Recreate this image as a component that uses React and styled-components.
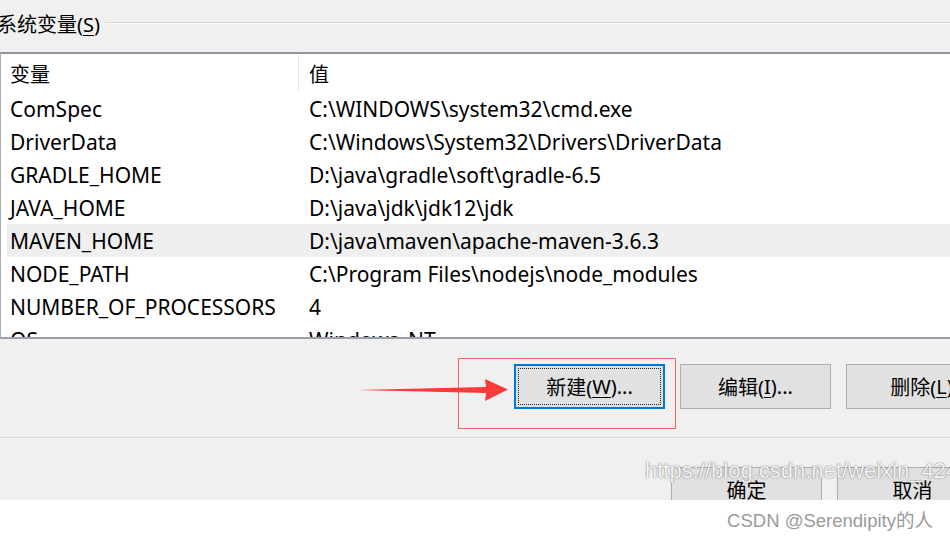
import React from "react";
import styled, { createGlobalStyle } from "styled-components";

const Global = createGlobalStyle`
  html, body { margin: 0; padding: 0; background: #ffffff; }
  body { width: 950px; height: 538px; overflow: hidden; }
  #root { width: 950px; height: 538px; }
`;

const Page = styled.div`
  position: relative;
  width: 950px;
  height: 538px;
  overflow: hidden;
  font-family: "Noto Sans", "Noto Sans CJK SC", sans-serif;
  color: #000;
`;

const Dialog = styled.div`
  height: 500px;
  background: #f0f0f0;
  overflow: hidden;
  display: flex;
  flex-direction: column;
  & > * { flex: none; }
`;

const GroupHead = styled.div`
  height: 46px;
  display: flex;
  align-items: center;
  gap: 6px;
  margin-left: -3px;
`;

const GroupTitle = styled.span`
  font-size: 20px;
  white-space: nowrap;
`;

const GroupLine = styled.div`
  flex: 1;
  height: 1px;
  background: #d5d5d5;
  border-bottom: 1px solid #fafafa;
`;

const ListBox = styled.div`
  margin-top: 6px;
  width: 1000px;
  height: 287px;
  background: #fff;
  border-top: 2px solid #8f959e;
  border-bottom: 2px solid #9aa0a8;
  border-left: 1px solid #a9adb3;
  padding-left: 6px;
  overflow: hidden;
  box-sizing: border-box;
`;

const Row = styled.div`
  display: flex;
  align-items: center;
  height: ${(p) => (p.$head ? 38 : 33)}px;
  background: ${(p) => (p.$hover ? "#efefef" : "transparent")};
  font-size: 21px;
  white-space: nowrap;
`;

const NameCell = styled.div`
  width: 292px;
  box-sizing: border-box;
  padding-left: 3px;
  height: ${(p) => (p.$head ? 36 : 33)}px;
  display: flex;
  align-items: center;
  font-size: ${(p) => (p.$head ? 20 : 21)}px;
  border-right: 1px solid ${(p) => (p.$head ? "#e5e5e5" : "transparent")};
`;

const ValueCell = styled.div`
  padding-left: 10px;
  font-size: ${(p) => (p.$head ? 20 : 21)}px;
`;

const U = styled.span`
  text-decoration: underline;
  text-underline-offset: 3px;
  text-decoration-thickness: 1px;
`;

const ActionRow = styled.div`
  display: flex;
  gap: 15px;
  padding-left: 514px;
  margin-top: 25px;
  height: 45px;
`;

const Button = styled.div`
  position: relative;
  flex: none;
  width: 151px;
  height: 45px;
  box-sizing: border-box;
  background: #e1e1e1;
  border: ${(p) => (p.$focus ? "2px solid #0078d7" : "1px solid #adadad")};
  display: flex;
  align-items: center;
  justify-content: center;
  font-size: 20px;
  white-space: nowrap;
  &::after {
    content: "";
    display: ${(p) => (p.$focus ? "block" : "none")};
    position: absolute;
    inset: 2px;
    border: 1px dotted #222;
  }
`;

const Separator = styled.div`
  margin-top: 28px;
  height: 1px;
  background: #dadada;
  border-bottom: 1px solid #f7f7f7;
`;

const FooterButtons = styled.div`
  display: flex;
  gap: 15px;
  padding-left: 671px;
  margin-top: 28px;
`;

const Footer = styled.div`
  height: 38px;
  display: flex;
  align-items: center;
  justify-content: flex-end;
  padding-right: 17px;
  font-family: "Liberation Sans", "Noto Sans CJK SC", sans-serif;
  font-size: 18.5px;
  color: #9a9a9a;
`;

const Highlight = styled.div`
  position: absolute;
  left: 458px;
  top: 358px;
  width: 218px;
  height: 71px;
  box-sizing: border-box;
  border: 1.5px solid #f06666;
`;

const ArrowSvg = styled.svg`
  position: absolute;
  left: 355px;
  top: 376px;
`;

const Watermark = styled.div`
  position: absolute;
  left: 645px;
  top: 458px;
  font-family: "Liberation Sans", sans-serif;
  font-size: 22px;
  color: rgba(255, 255, 255, 0.95);
  text-shadow: 0 0 1px rgba(80, 80, 80, 0.8), 0 0 2px rgba(110, 110, 110, 0.5);
  white-space: nowrap;
`;

const rows = [
  ["ComSpec", "C:\\WINDOWS\\system32\\cmd.exe"],
  ["DriverData", "C:\\Windows\\System32\\Drivers\\DriverData"],
  ["GRADLE_HOME", "D:\\java\\gradle\\soft\\gradle-6.5"],
  ["JAVA_HOME", "D:\\java\\jdk\\jdk12\\jdk"],
  ["MAVEN_HOME", "D:\\java\\maven\\apache-maven-3.6.3", true],
  ["NODE_PATH", "C:\\Program Files\\nodejs\\node_modules"],
  ["NUMBER_OF_PROCESSORS", "4"],
  ["OS", "Windows_NT"],
];

export default function App() {
  return (
    <Page>
      <Global />
      <Dialog>
        <GroupHead>
          <GroupTitle>
            系统变量(<U>S</U>)
          </GroupTitle>
          <GroupLine />
        </GroupHead>
        <ListBox>
          <Row $head>
            <NameCell $head>变量</NameCell>
            <ValueCell $head>值</ValueCell>
          </Row>
          {rows.map(([n, v, h]) => (
            <Row key={n} $hover={h}>
              <NameCell>{n}</NameCell>
              <ValueCell>{v}</ValueCell>
            </Row>
          ))}
        </ListBox>
        <ActionRow>
          <Button $focus>
            新建(<U>W</U>)...
          </Button>
          <Button>
            编辑(<U>I</U>)...
          </Button>
          <Button>
            删除(<U>L</U>)
          </Button>
        </ActionRow>
        <Separator />
        <FooterButtons>
          <Button>确定</Button>
          <Button>取消</Button>
        </FooterButtons>
      </Dialog>
      <Footer>CSDN @Serendipity的人</Footer>
      <Highlight />
      <ArrowSvg width="160" height="30" viewBox="0 0 160 30">
        <path
          d="M2 14 L131 11 L130 3 L153 13.5 L130 25 L131 17 Z"
          fill="#fd3a3a"
        />
      </ArrowSvg>
      <Watermark>https://blog.csdn.net/weixin_42430</Watermark>
    </Page>
  );
}
